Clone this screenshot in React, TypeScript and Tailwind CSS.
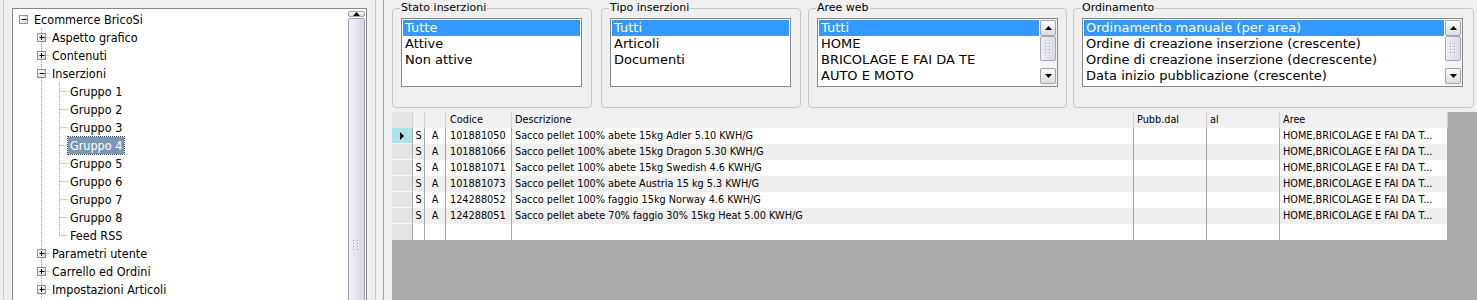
import React from 'react';

type TreeNode = { level: number; text: string; exp?: '+' | '-'; last?: boolean; sel?: boolean };

const tree: TreeNode[] = [
  { level: 0, text: 'Ecommerce BricoSi', exp: '-' },
  { level: 1, text: 'Aspetto grafico', exp: '+' },
  { level: 1, text: 'Contenuti', exp: '+' },
  { level: 1, text: 'Inserzioni', exp: '-' },
  { level: 2, text: 'Gruppo 1' },
  { level: 2, text: 'Gruppo 2' },
  { level: 2, text: 'Gruppo 3' },
  { level: 2, text: 'Gruppo 4', sel: true },
  { level: 2, text: 'Gruppo 5' },
  { level: 2, text: 'Gruppo 6' },
  { level: 2, text: 'Gruppo 7' },
  { level: 2, text: 'Gruppo 8' },
  { level: 2, text: 'Feed RSS', last: true },
  { level: 1, text: 'Parametri utente', exp: '+' },
  { level: 1, text: 'Carrello ed Ordini', exp: '+' },
  { level: 1, text: 'Impostazioni Articoli', exp: '+' },
];

const rows = [
  ['101881050', 'Sacco pellet 100% abete 15kg Adler 5.10 KWH/G'],
  ['101881066', 'Sacco pellet 100% abete 15kg Dragon 5.30 KWH/G'],
  ['101881071', 'Sacco pellet 100% abete 15kg Swedish 4.6 KWH/G'],
  ['101881073', 'Sacco pellet 100% abete Austria 15 kg 5.3 KWH/G'],
  ['124288052', 'Sacco pellet 100% faggio 15kg Norway 4.6 KWH/G'],
  ['124288051', 'Sacco pellet abete 70% faggio 30% 15kg Heat 5.00 KWH/G'],
];

const dots = '#a0a0a0';

// tree lines + expander box for one row
function Gutter({ node }: { node: TreeNode }) {
  const w = (node.level + 1) * 18;
  const c = node.level * 18 + 9.5;
  return (
    <svg width={w} height={18} className="shrink-0">
      {node.level === 2 && (
        <line x1={27.5} y1={0} x2={27.5} y2={18} stroke={dots} strokeDasharray="1 1" />
      )}
      {node.level > 0 && (
        <>
          <line x1={c} y1={0} x2={c} y2={node.last ? 9.5 : 18} stroke={dots} strokeDasharray="1 1" />
          <line x1={c} y1={9.5} x2={w} y2={9.5} stroke={dots} strokeDasharray="1 1" />
        </>
      )}
      {node.exp && (
        <>
          <defs>
            <linearGradient id="bx" x1="0" y1="0" x2="1" y2="1">
              <stop offset="0" stopColor="#ffffff" />
              <stop offset="1" stopColor="#d8d8d8" />
            </linearGradient>
          </defs>
          <rect x={c - 4} y={5.5} width={8} height={8} fill="url(#bx)" stroke="#919191" />
          <line x1={c - 2} y1={9.5} x2={c + 3} y2={9.5} stroke="#000" />
          {node.exp === '+' && <line x1={c} y1={7} x2={c} y2={12} stroke="#000" />}
        </>
      )}
    </svg>
  );
}

function Arrow({ down }: { down?: boolean }) {
  return (
    <svg width="7" height="4" viewBox="0 0 7 4">
      <path d={down ? 'M0 0H7L3.5 4Z' : 'M3.5 0L7 4H0Z'} fill="#000" />
    </svg>
  );
}

function Grip() {
  const pts: [number, number][] = [];
  for (let r = 0; r < 4; r++) for (let k = 0; k < 2; k++) pts.push([k * 4, r * 3]);
  return (
    <svg width="7" height="11">
      {pts.map(([x, y], i) => (
        <g key={i}>
          <rect x={x} y={y} width={1} height={1} fill="#9c9cac" />
          <rect x={x + 1} y={y + 1} width={1} height={1} fill="#ffffff" />
        </g>
      ))}
    </svg>
  );
}

function ScrollBtn({ down }: { down?: boolean }) {
  return (
    <div className="h-[16px] w-[16px] rounded-[2px] border border-[#a4a4a4] bg-gradient-to-b from-[#fafafa] to-[#dcdcdc] flex items-center justify-center">
      <Arrow down={down} />
    </div>
  );
}

function ListScroll() {
  return (
    <div className="w-[17px] shrink-0 flex flex-col pt-[1px] pb-[2px] bg-[#f4f4f4]">
      <ScrollBtn />
      <div className="h-[25px] w-[16px] rounded-[2px] border border-[#a6a6b6] bg-gradient-to-r from-[#efeff5] to-[#d9d9e3] flex items-center justify-center">
        <Grip />
      </div>
      <div className="flex-1" />
      <ScrollBtn down />
    </div>
  );
}

function ListBox({ className, items, scroll }: { className: string; items: string[]; scroll?: boolean }) {
  return (
    <div className={`${className} h-[69px] border border-[#828790] bg-white flex overflow-hidden font-['DejaVu_Sans',sans-serif]`}>
      <div className="flex-1 min-w-0 pt-[1px] px-[1px]">
        {items.map((t, i) => (
          <div
            key={t}
            className={`h-[16px] leading-[16px] px-[2px] text-[13px] whitespace-nowrap ${i === 0 ? 'bg-[#3399ff] text-white' : 'text-black'}`}
          >
            {t}
          </div>
        ))}
      </div>
      {scroll && <ListScroll />}
    </div>
  );
}

function Group({ title, className, children }: { title: string; className: string; children: React.ReactNode }) {
  return (
    <fieldset className={`${className} h-[107px] shrink-0 border border-[#c8c8c8] rounded-[4px] pl-[8px] pt-[3px]`}>
      <legend className="ml-[-1px] px-[1px] text-[11px] leading-[14px] font-['DejaVu_Sans',sans-serif]">{title}</legend>
      {children}
    </fieldset>
  );
}

export default function App() {
  return (
    <div className="w-[1477px] h-[300px] overflow-hidden bg-[#f0f0f0] flex text-black font-['DejaVu_Sans_Condensed','Liberation_Sans',sans-serif]">
      {/* Sezioni */}
      <div className="w-[384px] h-full shrink-0 border-r border-[#a0a0a0] pl-[3px] pr-[7px]">
        <fieldset className="w-[373px] h-[340px] mt-[-10px] border border-[#c8c8c8] rounded-[4px] px-[8px] pt-[5px]">
          <legend className="ml-[-2px] px-[1px] text-[11px] leading-[13px] font-['DejaVu_Sans',sans-serif]">Sezioni</legend>
          <div className="w-[355px] h-[330px] border border-[#828790] bg-white flex">
            <div className="flex-1 pt-[1px] pl-[1px]">
              {tree.map((n) => (
                <div key={n.text} className="h-[18px] flex items-center">
                  <Gutter node={n} />
                  <span
                    className={`px-[2px] h-[17px] leading-[17px] text-[12.5px] whitespace-nowrap ${n.sel ? 'bg-[#7c97b6] text-white outline-1 outline-dotted outline-[#3c4c60]' : ''}`}
                  >
                    {n.text}
                  </span>
                </div>
              ))}
            </div>
            <div className="w-[18px] pr-[1px] pt-[2px] flex flex-col">
              <div className="h-[16px] w-[17px] rounded-[2px] border border-[#a4a4a4] bg-gradient-to-b from-[#fafafa] to-[#dcdcdc] flex items-center justify-center">
                <Arrow />
              </div>
              <div className="mt-[1px] h-[454px] w-[17px] shrink-0 rounded-[2px] border border-[#9e9eae] bg-gradient-to-r from-[#f0f0f6] to-[#d8d8e2] flex items-center justify-center">
                <Grip />
              </div>
            </div>
          </div>
        </fieldset>
      </div>

      {/* Filters + grid */}
      <div className="flex-1 min-w-0 flex flex-col pl-[8px] pt-[1px]">
        <div className="flex items-start">
          <Group title="Stato inserzioni" className="w-[200px]">
            <ListBox className="w-[181px]" items={['Tutte', 'Attive', 'Non attive']} />
          </Group>
          <Group title="Tipo inserzioni" className="w-[200px] ml-[9px]">
            <ListBox className="w-[181px]" items={['Tutti', 'Articoli', 'Documenti']} />
          </Group>
          <Group title="Aree web" className="w-[259px] ml-[7px]">
            <ListBox className="w-[241px]" items={['Tutti', 'HOME', 'BRICOLAGE E FAI DA TE', 'AUTO E MOTO']} scroll />
          </Group>
          <Group title="Ordinamento" className="w-[401px] ml-[6px]">
            <ListBox
              className="w-[381px]"
              items={[
                'Ordinamento manuale (per area)',
                'Ordine di creazione inserzione (crescente)',
                'Ordine di creazione inserzione (decrescente)',
                'Data inizio pubblicazione (crescente)',
              ]}
              scroll
            />
          </Group>
        </div>

        <div className="mt-[4px] flex-1 bg-[#ababab] text-[10.8px] leading-[16px]">
          <div className="w-[1056px]">
            <div className="grid grid-cols-[21px_12px_21px_66px_622px_73px_73px_168px] h-[16px] bg-[#f1f1f1]">
              <div className="bg-[#e6e6e6] border-r border-[#d0d0d0]" />
              <div className="border-r border-[#d0d0d0]" />
              <div className="border-r border-[#d0d0d0]" />
              <div className="border-r border-[#d0d0d0] pl-[4px]">Codice</div>
              <div className="border-r border-[#d0d0d0] pl-[3px]">Descrizione</div>
              <div className="border-r border-[#d0d0d0] pl-[3px]">Pubb.dal</div>
              <div className="border-r border-[#d0d0d0] pl-[3px]">al</div>
              <div className="border-r border-[#d0d0d0] pl-[3px]">Aree</div>
            </div>
            {rows.map(([code, desc], i) => (
              <div
                key={code}
                className={`grid grid-cols-[21px_12px_21px_66px_622px_73px_73px_168px] h-[16px] ${i % 2 === 1 ? 'bg-[#efefef]' : 'bg-white'}`}
              >
                <div
                  className={`border-r border-b border-r-[#a8a8a8] border-b-[#f6f6f6] flex items-center justify-center ${i === 0 ? 'bg-[#a9e4e9]' : 'bg-[#e4e4e4]'}`}
                >
                  {i === 0 && (
                    <svg width="4" height="8" viewBox="0 0 4 8">
                      <path d="M0 0L4 4L0 8Z" fill="#000" />
                    </svg>
                  )}
                </div>
                <div className="border-r border-[#a8a8a8] text-center">S</div>
                <div className="border-r border-[#a8a8a8] text-center">A</div>
                <div className="border-r border-[#a8a8a8] pl-[4px]">{code}</div>
                <div className="border-r border-[#a8a8a8] pl-[3px] whitespace-nowrap overflow-hidden">{desc}</div>
                <div className="border-r border-[#a8a8a8]" />
                <div className="border-r border-[#a8a8a8]" />
                <div className="border-r border-[#a8a8a8] pl-[3px] whitespace-nowrap overflow-hidden">HOME,BRICOLAGE E FAI DA T...</div>
              </div>
            ))}
            <div className="grid grid-cols-[21px_12px_21px_66px_622px_73px_73px_168px] h-[16px] bg-white">
              <div className="bg-[#e4e4e4] border-r border-[#a8a8a8]" />
              <div className="border-r border-[#a8a8a8]" />
              <div className="border-r border-[#a8a8a8]" />
              <div className="border-r border-[#a8a8a8]" />
              <div className="border-r border-[#a8a8a8]" />
              <div className="border-r border-[#a8a8a8]" />
              <div className="border-r border-[#a8a8a8]" />
              <div className="border-r border-[#a8a8a8]" />
            </div>
          </div>
        </div>
      </div>
    </div>
  );
}
